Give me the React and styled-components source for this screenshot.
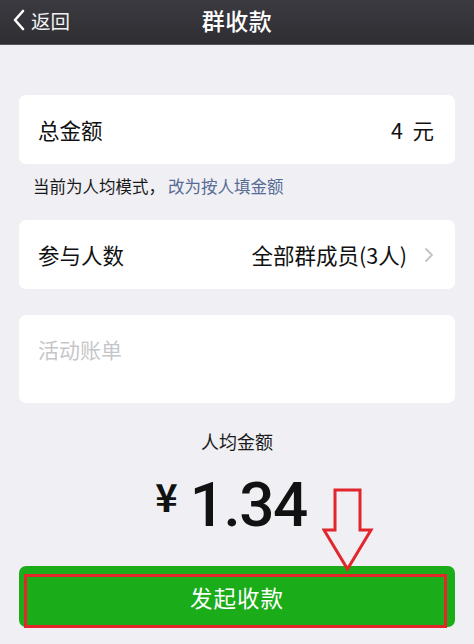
import React from "react";
import styled, { createGlobalStyle } from "styled-components";

const GlobalStyle = createGlobalStyle`
  html, body {
    margin: 0;
    padding: 0;
    background: #efeff4;
  }
  * {
    box-sizing: border-box;
  }
`;

const cjk = `"Noto Sans CJK SC", "Noto Sans", sans-serif`;

function App() {
  return (
    <Page>
      <GlobalStyle />
      <NavBar>
        <BackLink>
          <svg width="14" height="22" viewBox="0 0 14 22">
            <path
              d="M11 2 L3 11 L11 20"
              fill="none"
              stroke="#fff"
              strokeWidth="2.6"
              strokeLinecap="round"
              strokeLinejoin="round"
            />
          </svg>
          <span>返回</span>
        </BackLink>
        <Title>群收款</Title>
      </NavBar>

      <Content>
        <Card>
          <Label>总金额</Label>
          <Value>4&nbsp;&nbsp;元</Value>
        </Card>
        <Hint>
          当前为人均模式，<HintLink>改为按人填金额</HintLink>
        </Hint>

        <Card $top={22}>
          <Label>参与人数</Label>
          <Value>
            全部群成员(3人)
            <svg width="10" height="16" viewBox="0 0 10 16">
              <path
                d="M2 2 L8 8 L2 14"
                fill="none"
                stroke="#c4c4c8"
                strokeWidth="1.8"
                strokeLinecap="round"
                strokeLinejoin="round"
              />
            </svg>
          </Value>
        </Card>

        <NoteCard>
          <Placeholder>活动账单</Placeholder>
        </NoteCard>

        <Summary>
          <SummaryLabel>人均金额</SummaryLabel>
          <Amount>
            <Yen>¥</Yen>
            <Digits>1.34</Digits>
          </Amount>
        </Summary>

        <ButtonWrap>
          <Arrow width="52" height="84" viewBox="0 0 52 84">
            <path
              d="M13 2 H38 V42 H49 L25.5 81 L2 42 H13 Z"
              fill="none"
              stroke="#e3262c"
              strokeWidth="3"
              strokeLinejoin="miter"
            />
          </Arrow>
          <PayButton>
            发起收款
            <Highlight />
          </PayButton>
        </ButtonWrap>
      </Content>
    </Page>
  );
}

export default App;

const Page = styled.div`
  width: 474px;
  height: 644px;
  overflow: hidden;
  display: flex;
  flex-direction: column;
  background: #efeff4;
  font-family: ${cjk};
  color: #111;
`;

const NavBar = styled.div`
  height: 45px;
  flex: none;
  display: flex;
  align-items: center;
  justify-content: center;
  position: relative;
  background: linear-gradient(#3b3a40, #2f2e33);
  border-bottom: 1px solid #55545a;
`;

const BackLink = styled.div`
  position: absolute;
  left: 12px;
  top: 0;
  height: 44px;
  display: flex;
  align-items: center;
  gap: 5px;
  color: #f2f2f2;
  font-size: 19.5px;
  margin-top: -2px;
`;

const Title = styled.div`
  color: #fff;
  font-size: 23px;
  font-weight: 500;
  letter-spacing: 0.5px;
  margin-top: -4px;
`;

const Content = styled.div`
  flex: 1;
  display: flex;
  flex-direction: column;
  padding: 50px 19px 0;
`;

const Card = styled.div`
  height: 69px;
  margin-top: ${(p) => p.$top || 0}px;
  background: #fff;
  border-radius: 7px;
  display: flex;
  align-items: center;
  justify-content: space-between;
  padding: 0 21px 0 19px;
`;

const Label = styled.div`
  font-size: 21.5px;
  color: #111;
`;

const Value = styled.div`
  font-size: 21.5px;
  color: #111;
  display: flex;
  align-items: center;
  gap: 17px;
`;

const Hint = styled.div`
  font-size: 16.5px;
  color: #1a1a1a;
  padding: 10px 0 0 14px;
  line-height: 24px;
`;

const HintLink = styled.span`
  color: #576b95;
  margin-left: 3px;
`;

const NoteCard = styled.div`
  height: 88px;
  margin-top: 26px;
  background: #fff;
  border-radius: 7px;
  padding: 19px 19px 0;
`;

const Placeholder = styled.div`
  font-size: 21px;
  color: #c6c6ca;
`;

const Summary = styled.div`
  display: flex;
  flex-direction: column;
  align-items: center;
`;

const SummaryLabel = styled.div`
  font-size: 18px;
  color: #1a1a1a;
  margin-top: 25px;
`;

const Amount = styled.div`
  display: flex;
  align-items: baseline;
  line-height: 1;
  margin-top: 20px;
  margin-right: 12px;
  gap: 12px;
  color: #111;
`;

const Yen = styled.span`
  font-family: ${cjk};
  font-size: 38px;
  font-weight: 700;
  position: relative;
  top: -14px;
`;

const Digits = styled.span`
  font-family: Roboto, "Liberation Sans", sans-serif;
  font-size: 62px;
  font-weight: 500;
  letter-spacing: -1.5px;
`;

const ButtonWrap = styled.div`
  position: relative;
  margin-top: 30px;
`;

const Arrow = styled.svg`
  position: absolute;
  left: 303px;
  top: -78px;
  z-index: 2;
`;

const PayButton = styled.div`
  position: relative;
  height: 61px;
  background: #1aad19;
  border-radius: 7px;
  color: #fff;
  font-size: 22.5px;
  display: flex;
  align-items: center;
  justify-content: center;
  letter-spacing: 1px;
`;

const Highlight = styled.div`
  position: absolute;
  left: 5px;
  right: 8px;
  top: 8px;
  bottom: -1px;
  border: 3px solid #e3262c;
`;
